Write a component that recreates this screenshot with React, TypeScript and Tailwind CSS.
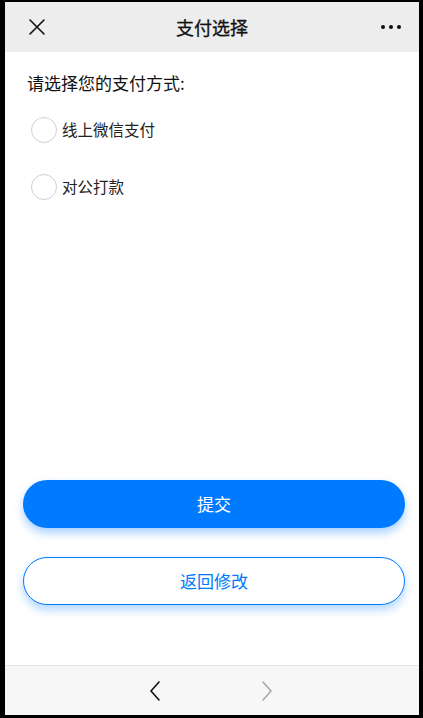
import React, { useState } from 'react'

const options = [
  { id: 'wechat', label: '线上微信支付' },
  { id: 'transfer', label: '对公打款' },
]

function CloseIcon() {
  return (
    <svg width="18" height="18" viewBox="0 0 18 18" fill="none">
      <path d="M2 2L16 16M16 2L2 16" stroke="#111" strokeWidth="1.6" strokeLinecap="round" />
    </svg>
  )
}

function Chevron({ dir, color }: { dir: 'left' | 'right'; color: string }) {
  const d = dir === 'left' ? 'M10 1L2 10L10 19' : 'M2 1L10 10L2 19'
  return (
    <svg width="12" height="20" viewBox="0 0 12 20" fill="none">
      <path d={d} stroke={color} strokeWidth="1.6" strokeLinecap="round" strokeLinejoin="round" />
    </svg>
  )
}

export default function App() {
  const [selected, setSelected] = useState<string | null>(null)

  return (
    <div
      className="w-[423px] h-[718px] bg-black pt-[2px] pl-[5px] pr-[4px] pb-[3px]"
      style={{ fontFamily: '"Noto Sans CJK SC", "Noto Sans", sans-serif' }}
    >
      <div className="flex h-full flex-col bg-white">
        {/* Header */}
        <div className="relative flex h-[50px] shrink-0 items-center justify-center bg-[#ededed]">
          <button className="absolute left-[23px] top-[16px] flex items-center justify-center">
            <CloseIcon />
          </button>
          <h1 className="text-[18px] font-normal text-[#111] [-webkit-text-stroke:0.3px_#111]">支付选择</h1>
          <div className="absolute right-[18px] top-[23px] flex gap-[4px]">
            <span className="h-[4px] w-[4px] rounded-full bg-[#111]" />
            <span className="h-[4px] w-[4px] rounded-full bg-[#111]" />
            <span className="h-[4px] w-[4px] rounded-full bg-[#111]" />
          </div>
        </div>

        {/* Content */}
        <div className="flex flex-1 flex-col">
          <p className="mt-[19px] pl-[22px] text-[17px] leading-[24px] text-[#111]">请选择您的支付方式:</p>

          <div className="mt-[22px] flex flex-col gap-[31px] pl-[26px]">
            {options.map((opt) => (
              <label key={opt.id} className="flex h-[26px] cursor-pointer items-center gap-[5px]">
                <span
                  onClick={() => setSelected(opt.id)}
                  className={
                    selected === opt.id
                      ? 'flex h-[26px] w-[26px] items-center justify-center rounded-full border border-[#007aff] bg-[#007aff]'
                      : 'flex h-[26px] w-[26px] items-center justify-center rounded-full border border-[#d0d0d0] bg-white'
                  }
                >
                  {selected === opt.id && <span className="h-[10px] w-[10px] rounded-full bg-white" />}
                </span>
                <span className="text-[15.5px] text-[#222]" onClick={() => setSelected(opt.id)}>
                  {opt.label}
                </span>
              </label>
            ))}
          </div>

          <div className="mt-auto flex flex-col gap-[29px] pb-[60px] pl-[18px]">
            <button className="flex h-[48px] w-[382px] items-center justify-center rounded-full bg-[#007aff] text-[17px] text-white shadow-[0_5px_10px_rgba(0,122,255,0.35)]">
              提交
            </button>
            <button className="flex h-[48px] w-[382px] items-center justify-center rounded-full border border-[#007aff] bg-white text-[17px] text-[#007aff] shadow-[0_5px_10px_rgba(0,122,255,0.3)]">
              返回修改
            </button>
          </div>
        </div>

        {/* Bottom nav */}
        <div className="flex h-[50px] shrink-0 items-center justify-center gap-[100px] border-t border-[#e5e5e5] bg-[#f7f7f7] pr-[3px]">
          <Chevron dir="left" color="#111" />
          <Chevron dir="right" color="#a8a8a8" />
        </div>
      </div>
    </div>
  )
}
